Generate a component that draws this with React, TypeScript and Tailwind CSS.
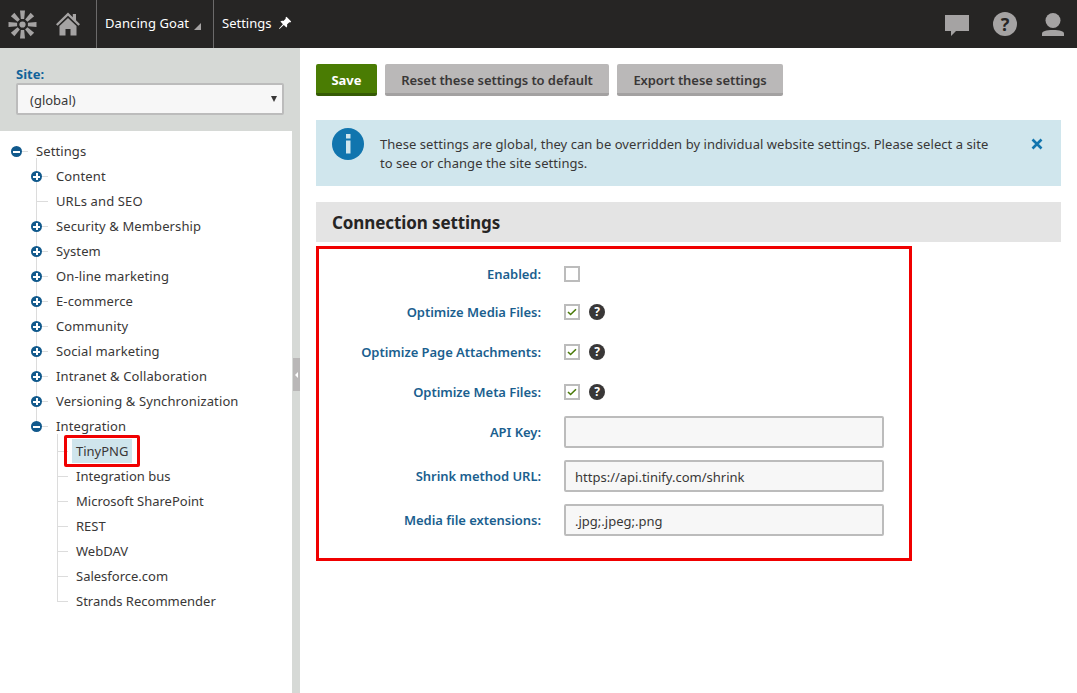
import React from "react";

const font = "font-['Noto_Sans',sans-serif]";

function Logo() {
  const spokes = [0, 45, 90, 135, 180, 225, 270, 315];
  return (
    <svg width="29" height="29" viewBox="0 0 28 28" className="text-[#a5a3a3]">
      {spokes.map((a) => (
        <path key={a} d="M11.6.5h4.800l-.8 8.300h-3.200z" fill="currentColor" transform={`rotate(${a} 14 14)`} />
      ))}
      <circle cx="14" cy="14" r="3" fill="currentColor" />
    </svg>
  );
}

function Home() {
  return (
    <svg width="26" height="26" viewBox="0 0 26 26">
      <path d="M13 1.500 1 13.200l1.600 1.600L13 4.800l10.400 10 1.600-1.600-4-3.900V3h-3.200v3.200z" fill="#a5a3a3" />
      <path d="M13 7 4.500 15v9.500h6v-6.500h5v6.500h6V15z" fill="#a5a3a3" />
    </svg>
  );
}

function Toggle({ open }: { open?: boolean }) {
  return (
    <span className="relative z-10 flex h-[11px] w-[11px] items-center justify-center rounded-full bg-[#11598c]">
      <span className="absolute h-[2px] w-[7px] bg-white" />
      {!open && <span className="absolute h-[7px] w-[2px] bg-white" />}
    </span>
  );
}

function Row({ label, level, toggle, open }: { label: string; level: number; toggle?: boolean; open?: boolean }) {
  const textLeft = level === 0 ? "pl-[36px] tracking-[0.1px]" : level === 1 ? "pl-[56px] tracking-[0.12px]" : "pl-[76px]";
  return (
    <div className={`relative flex h-[25px] items-center text-[#393737] ${textLeft}`}>
      {level === 1 && <span className="absolute left-[36px] top-[12px] h-px w-[12px] bg-[#dcdcdc]" />}
      {level === 2 && <span className="absolute left-[57px] top-[12px] h-px w-[11px] bg-[#dcdcdc]" />}
      {level === 0 && <span className="absolute left-[16px] top-[12px] h-px w-[12px] bg-[#dcdcdc]" />}
      {toggle && (
        <span className={`absolute top-[7px] ${level === 0 ? "left-[11px]" : "left-[31px]"}`}>
          <Toggle open={open} />
        </span>
      )}
      <span>{label}</span>
    </div>
  );
}

function Check({ checked }: { checked?: boolean }) {
  return (
    <span className="flex h-4 w-4 items-center justify-center border-2 border-[#bcbcbc] bg-white">
      {checked && (
        <svg width="10" height="8" viewBox="0 0 10 8">
          <path d="M1 4l2.600 2.500L9 1.200" fill="none" stroke="#4a7a0a" strokeWidth="1.600" />
        </svg>
      )}
    </span>
  );
}

function Help() {
  return (
    <span className="ml-[9px] flex h-4 w-4 items-center justify-center rounded-full bg-[#393737] text-[12px] font-bold leading-none text-white">
      ?
    </span>
  );
}

function CheckRow({ label, checked, help, cls }: { label: string; checked?: boolean; help?: boolean; cls: string }) {
  return (
    <div className={`flex items-center ${cls}`}>
      <div className="w-[222px] pt-[2px] text-right font-semibold tracking-[-0.04px] text-[#1b5f8f]">{label}</div>
      <div className="ml-[23px] flex items-center">
        <Check checked={checked} />
        {help && <Help />}
      </div>
    </div>
  );
}

function InputRow({ label, value, cls }: { label: string; value?: string; cls: string }) {
  return (
    <div className={`flex items-center ${cls}`}>
      <div className="w-[222px] pt-[2px] text-right font-semibold tracking-[-0.04px] text-[#1b5f8f]">{label}</div>
      <div className="ml-[23px] flex h-8 w-[320px] items-center rounded-[2px] border-2 border-[#bcbcbc] bg-[#f7f7f7] px-[9px] pt-[3px] text-[#393737]">
        {value}
      </div>
    </div>
  );
}

export default function App() {
  return (
    <div className={`flex h-[693px] w-[1077px] flex-col overflow-hidden bg-white text-[13px] ${font}`}>
      <header className="flex h-12 shrink-0 items-center bg-[#262524] text-white">
        <div className="flex w-[44px] justify-center">
          <Logo />
        </div>
        <div className="flex w-[52px] justify-center pr-[4px]">
          <Home />
        </div>
        <div className="flex h-full w-[117px] items-center border-l border-[#6b6a6a] pl-[8px] tracking-[0.08px]">
          Dancing Goat
          <span className="ml-[5px] mt-[5px] h-0 w-0 border-b-[7px] border-l-[7px] border-b-[#a5a3a3] border-l-transparent" />
        </div>
        <div className="flex h-full items-center border-l border-[#6b6a6a] pl-[8px]">
          Settings
          <svg width="14" height="14" viewBox="0 0 14 14" className="ml-[7px] -mt-[2px]">
            <path d="M8.500.8l4.700 4.700-1 .9-.9-.2-2.300 2.400c.4 1.200.1 2.300-.6 3L5.800 9.100 1.500 13l-.5-.5 3.900-4.300-2.500-2.600c.7-.7 1.800-1 3-.6L7.700 2.700l-.2-.9z" fill="#fff" />
          </svg>
        </div>
        <div className="ml-auto flex items-center pr-[13px]">
          <svg width="24" height="21" viewBox="0 0 24 21" className="mt-[3px]">
            <path d="M0 0h24v16H11l-5 5v-5H0z" fill="#a5a3a3" />
          </svg>
          <span className="ml-[24px] flex h-6 w-6 items-center justify-center rounded-full bg-[#a5a3a3] text-[18px] font-bold leading-none text-[#262524]">?</span>
          <svg width="22" height="23" viewBox="0 0 22 23" className="ml-[25px]">
            <circle cx="11" cy="7.500" r="7.500" fill="#a5a3a3" />
            <path d="M0 23v-2.500c0-2 4-3.500 11-3.500s11 1.500 11 3.500V23z" fill="#a5a3a3" />
          </svg>
        </div>
      </header>

      <div className="flex min-h-0 flex-1">
        <aside className="flex w-[292px] shrink-0 flex-col">
          <div className="h-[83px] shrink-0 bg-[#d6d9d6] pl-4 pr-2 pt-[17px]">
            <div className="h-[18px] font-bold leading-[18px] text-[#11639a]">Site:</div>
            <div className="relative flex h-8 items-center rounded-[2px] border-2 border-[#bcbcbc] bg-[#f7f7f7] pl-[12px] pt-[3px] text-[#393737]">
              (global)
              <span className="absolute right-[5px] top-[11px] h-0 w-0 border-x-[3px] border-t-[6px] border-x-transparent border-t-[#393737]" />
            </div>
          </div>
          <div className="flex-1 pt-[8px]">
            <Row label="Settings" level={0} toggle open />
            <div className="relative">
              <span className="absolute left-[36px] top-[-6px] h-[268px] w-px bg-[#dcdcdc]" />
              <Row label="Content" level={1} toggle />
              <Row label="URLs and SEO" level={1} />
              <Row label="Security & Membership" level={1} toggle />
              <Row label="System" level={1} toggle />
              <Row label="On-line marketing" level={1} toggle />
              <Row label="E-commerce" level={1} toggle />
              <Row label="Community" level={1} toggle />
              <Row label="Social marketing" level={1} toggle />
              <Row label="Intranet & Collaboration" level={1} toggle />
              <Row label="Versioning & Synchronization" level={1} toggle />
              <Row label="Integration" level={1} toggle open />
            </div>
            <div className="relative">
              <span className="absolute left-[57px] top-[-5px] h-[167px] w-px bg-[#dcdcdc]" />
              <div className="relative">
                <Row label="" level={2} />
                <div className="absolute left-[72px] top-0 flex h-6 items-center bg-[#cfe5ec] px-[4px] pt-[1px] text-[#393737]">TinyPNG</div>
                <div className="absolute left-[64px] top-[-4px] h-[32px] w-[76px] rounded-[2px] border-[3px] border-[#f00000]" />
              </div>
              <Row label="Integration bus" level={2} />
              <Row label="Microsoft SharePoint" level={2} />
              <Row label="REST" level={2} />
              <Row label="WebDAV" level={2} />
              <Row label="Salesforce.com" level={2} />
              <Row label="Strands Recommender" level={2} />
            </div>
          </div>
        </aside>

        <div className="relative w-2 shrink-0 bg-[#d6d9d6]">
          <div className="absolute left-px top-[310px] flex h-[33px] w-[7px] items-center justify-center bg-[#b9b7b7]">
            <span className="h-0 w-0 border-y-[3px] border-r-[3px] border-y-transparent border-r-white" />
          </div>
        </div>

        <main className="relative flex-1 pl-4 pr-4 pt-4">
          <div className="flex gap-2">
            <button className="h-8 w-[61px] rounded-[2px] border-b-[3px] border-[#355a05] bg-[#4a7c03] pt-[5px] font-bold text-white">Save</button>
            <button className="h-8 w-[224px] rounded-[2px] border-b-[3px] border-[#a3a1a1] bg-[#bab8b8] pt-[5px] font-semibold tracking-[-0.07px] text-[#393737]">Reset these settings to default</button>
            <button className="h-8 w-[166px] rounded-[2px] border-b-[3px] border-[#a3a1a1] bg-[#bab8b8] pt-[5px] font-semibold tracking-[-0.07px] text-[#393737]">Export these settings</button>
          </div>

          <div className="mt-6 flex h-[66px] bg-[#d0e6ed] pl-4 pt-[8px] text-[#393737]">
            <svg width="32" height="32" viewBox="0 0 32 32" className="shrink-0">
              <circle cx="16" cy="16" r="16" fill="#1175ae" />
              <rect x="14" y="6" width="4.500" height="4.500" fill="#d0e6ed" />
              <rect x="14" y="12.500" width="4.500" height="13" fill="#d0e6ed" />
            </svg>
            <p className="ml-4 w-[618px] pt-[7px] leading-[19px] tracking-[0.05px]">
              These settings are global, they can be overridden by individual website settings. Please select a site to see or change the site settings.
            </p>
            <svg width="12" height="12" viewBox="0 0 12 12" className="ml-[33px] mt-[10px]">
              <path d="M1.500 1.500l9 9M10.500 1.500l-9 9" stroke="#1175ae" strokeWidth="2.600" />
            </svg>
          </div>

          <h2 className="mt-4 flex h-10 items-center bg-[#e4e4e4] pl-4 pt-[2px] text-[17px] font-bold tracking-[-0.1px] text-[#262524]">Connection settings</h2>

          <div className="relative mt-[4px] h-[315px] w-[596px] border-[3px] border-[#f00000] text-[13px]">
            <div className="pt-[17px]">
              <CheckRow label="Enabled:" cls="h-[16px]" />
              <CheckRow label="Optimize Media Files:" checked help cls="mt-[22px] h-[16px]" />
              <CheckRow label="Optimize Page Attachments:" checked help cls="mt-[24px] h-[16px]" />
              <CheckRow label="Optimize Meta Files:" checked help cls="mt-[24px] h-[16px]" />
              <InputRow label="API Key:" cls="mt-4" />
              <InputRow label="Shrink method URL:" value="https://api.tinify.com/shrink" cls="mt-3" />
              <InputRow label="Media file extensions:" value=".jpg;.jpeg;.png" cls="mt-3" />
            </div>
          </div>
        </main>
      </div>
    </div>
  );
}
